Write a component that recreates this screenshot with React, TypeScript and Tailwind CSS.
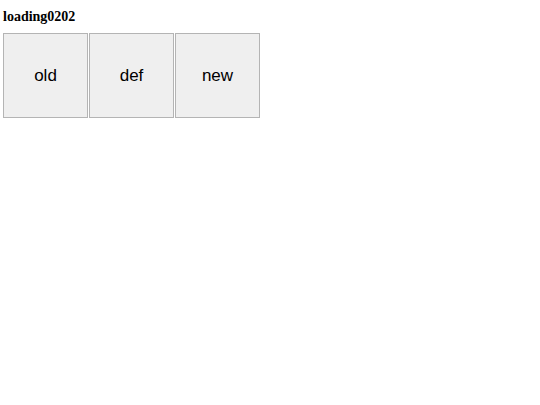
const App = () => {
  const items = ["old", "def", "new"];
  return (
    <div className="px-[3px] pt-[8px]">
      <h3 className="text-[14px] font-bold leading-[17px] text-black [font-family:'Liberation_Serif',serif]">
        loading0202
      </h3>
      <div className="mt-[8px] flex gap-[1px]">
        {items.map((item) => (
          <button
            key={item}
            className="flex h-[85px] w-[85px] items-center justify-center border border-[#b4b4b4] bg-[#efefef] text-[17px] text-black [font-family:'Liberation_Sans',sans-serif]"
          >
            {item}
          </button>
        ))}
      </div>
    </div>
  );
};

export default App;
